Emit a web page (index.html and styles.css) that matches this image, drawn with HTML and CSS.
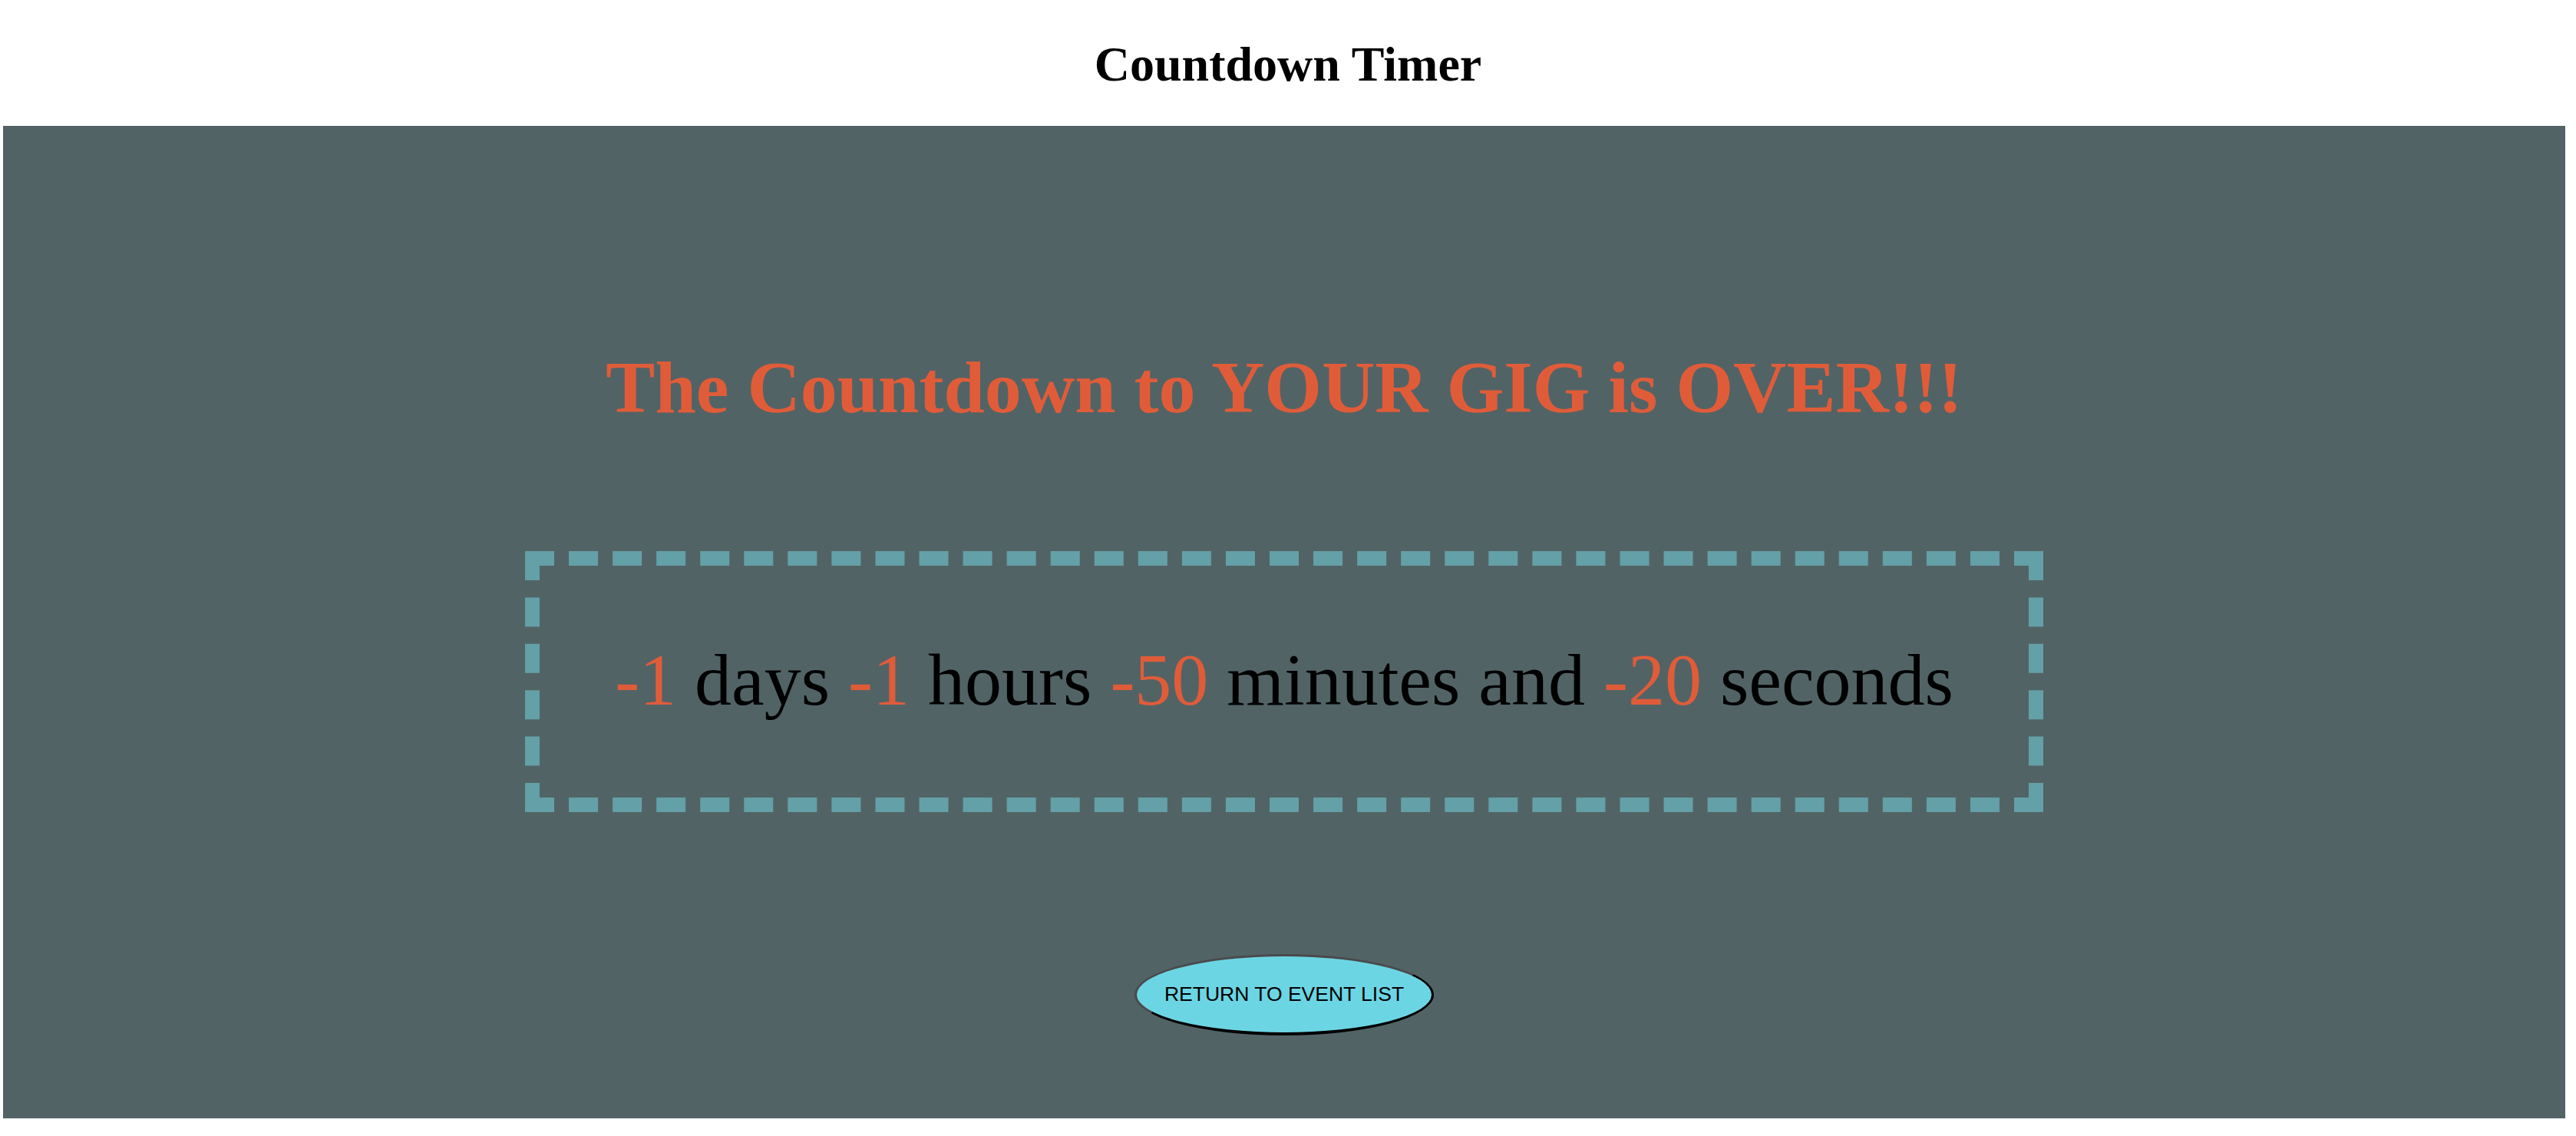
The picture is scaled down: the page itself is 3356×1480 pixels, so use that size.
FILE: index.html
```html
<!DOCTYPE html>
<html lang="en">
<head>
<meta charset="utf-8">
<title>Countdown Timer</title>
<link rel="stylesheet" href="styles.css">
</head>
<body>
<h1 class="page-title">Countdown Timer</h1>
<main class="panel">
  <h2 class="headline">The Countdown to YOUR GIG is OVER!!!</h2>
  <div class="timer-box">
    <span class="num">-1</span> days <span class="num">-1</span> hours <span class="num">-50</span> minutes and <span class="num">-20</span> seconds
  </div>
  <button class="return-btn" type="button">RETURN TO EVENT LIST</button>
</main>
</body>
</html>
```

FILE: styles.css
```css
html, body {
  margin: 0;
  padding: 0;
  background: #ffffff;
}

body {
  font-family: "Liberation Serif", "Times New Roman", serif;
  color: #000;
}

.page-title {
  margin: 48px 0 45px;
  font-size: 64px;
  line-height: 71px;
  font-weight: bold;
  text-align: center;
}

.panel {
  margin-left: 4px;
  width: 3338px;
  height: 1293px;
  background: #526366;
  display: flex;
  flex-direction: column;
  align-items: center;
}

.headline {
  margin: 288px 0 0;
  font-size: 96px;
  line-height: 106px;
  font-weight: bold;
  color: #e05c39;
}

.timer-box {
  margin-top: 160px;
  border: 19px dashed #64a0a7;
  padding: 96px 98px 100px;
  font-size: 96px;
  line-height: 106px;
  white-space: nowrap;
}

.num {
  color: #e05c39;
}

.return-btn {
  margin-top: 185px;
  width: 390px;
  height: 106px;
  border-radius: 50%;
  border-style: solid;
  border-width: 3px 3px 4px 3px;
  border-color: #4a4a4a #000 #000 #4a4a4a;
  background: #6cd5e3;
  color: #000;
  font-family: "Liberation Sans", Arial, sans-serif;
  font-size: 26.5px;
  padding: 0;
}
```
